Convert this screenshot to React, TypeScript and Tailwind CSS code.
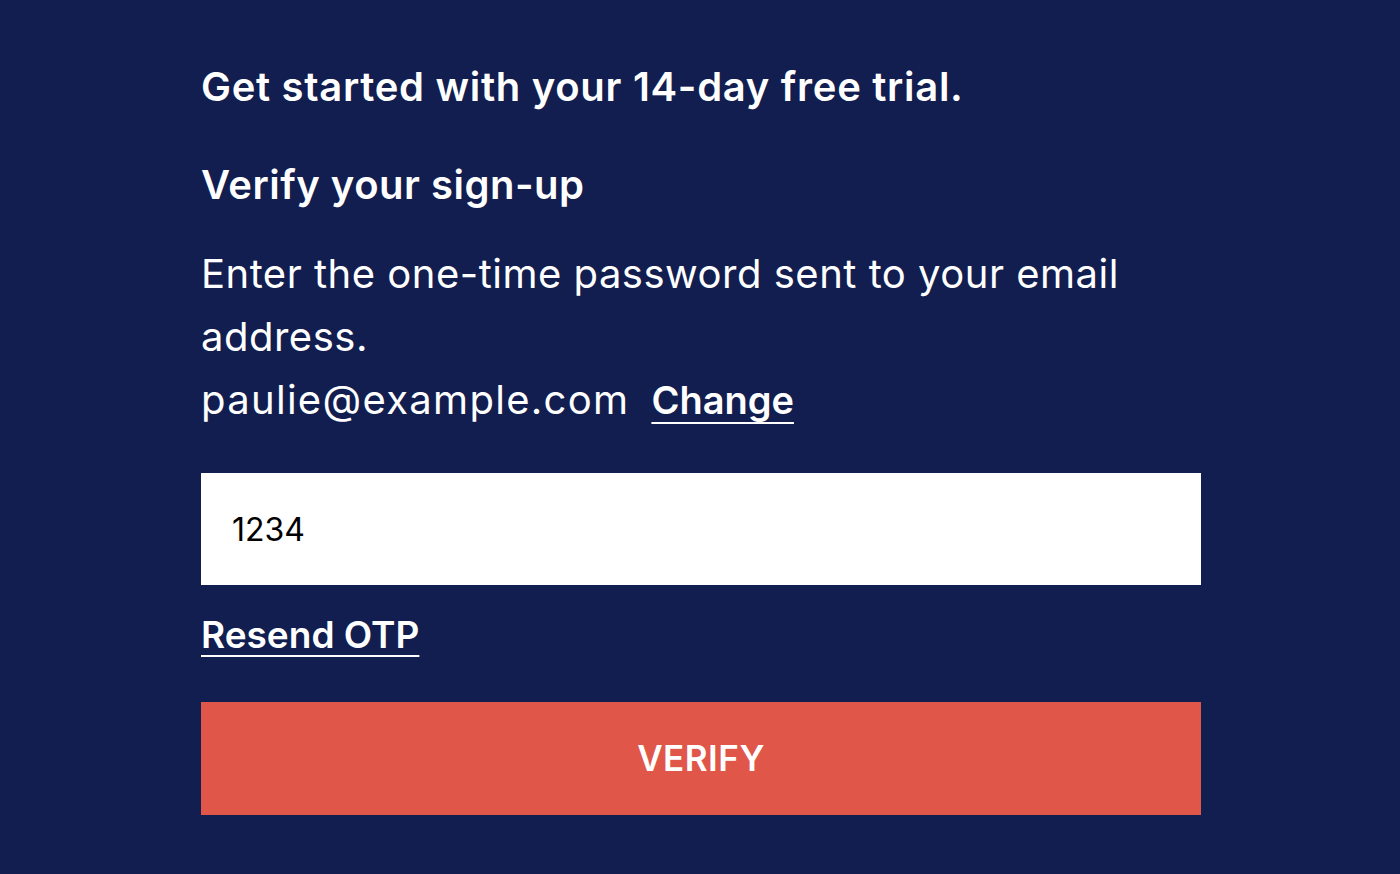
import * as React from "react"

export default function App() {
  const [otp, setOtp] = React.useState("1234")

  return (
    <div
      className="min-h-[874px] w-full bg-[#111e4f] text-white"
      style={{ fontFamily: "Inter, 'Noto Sans', sans-serif" }}
    >
      <div className="ml-[201px] w-[1000px] pt-[62px]">
        <h1 className="text-[40px] font-semibold leading-[50px] tracking-[0.7px]">
          Get started with your 14-day free trial.
        </h1>
        <h2 className="mt-[48px] text-[40px] font-semibold leading-[50px] tracking-[0.5px]">
          Verify your sign-up
        </h2>
        <p className="mt-[32px] text-[40px] font-normal leading-[63px] tracking-[0.5px]">
          Enter the one-time password sent to your email address.
          <br />
          <span className="tracking-[1.3px]">paulie@example.com</span>
          <a
            href="#"
            className="ml-[22px] text-[38px] font-semibold tracking-[0px] underline underline-offset-[8px] decoration-[2px]"
          >
            Change
          </a>
        </p>
        <input
          value={otp}
          onChange={(e) => setOtp(e.target.value)}
          className="mt-[41px] block h-[112px] w-full bg-white px-[31px] text-[32px] text-black outline-none"
        />
        <a
          href="#"
          className="mt-[25px] inline-block text-[37px] font-semibold leading-[50px] tracking-[0px] underline underline-offset-[7px] decoration-[2px]"
        >
          Resend OTP
        </a>
        <button className="mt-[42px] block h-[113px] w-full bg-[#e05649] text-[35px] font-semibold tracking-[0.5px] text-white">
          VERIFY
        </button>
      </div>
    </div>
  )
}
